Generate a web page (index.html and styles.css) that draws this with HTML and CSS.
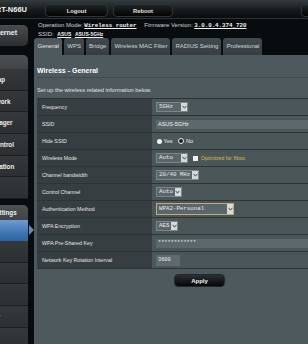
FILE: index.html
```html
<!DOCTYPE html>
<html lang="en">
<head>
    <meta charset="UTF-8">
    <meta name="viewport" content="width=device-width, initial-scale=1.0">
    <title>RT-N66U - Wireless General</title>
    <link rel="stylesheet" href="styles.css">
</head>
<body>
    <div class="page">
        <header class="topbar">
            <div class="logo"><span>RT-N66U</span></div>
            <button class="top-btn btn-logout">Logout</button>
            <button class="top-btn btn-reboot">Reboot</button>
            <button class="top-btn btn-lang">English</button>
        </header>

        <div class="main">
            <nav class="sidenav">
                <div class="quick"><span class="nav-label quick-label">Quick Internet<br>Setup</span></div>

                <div class="menu">
                    <div class="menu-head"><span class="nav-label head-label">General</span></div>
                    <div class="menu-item"><span class="nav-label">Network Map</span></div>
                    <div class="menu-item"><span class="nav-label">Guest Network</span></div>
                    <div class="menu-item"><span class="nav-label">Traffic Manager</span></div>
                    <div class="menu-item"><span class="nav-label">Parental control</span></div>
                    <div class="menu-item"><span class="nav-label">USB application</span></div>
                    <div class="menu-item"><span class="nav-label">AiCloud</span></div>
                </div>

                <div class="menu menu-adv">
                    <div class="menu-head"><span class="nav-label head-label">Advanced Settings</span></div>
                    <div class="menu-item active"><span class="nav-label">Wireless</span></div>
                    <div class="menu-item"><span class="nav-label">LAN</span></div>
                    <div class="menu-item"><span class="nav-label">WAN</span></div>
                    <div class="menu-item"><span class="nav-label">IPv6</span></div>
                    <div class="menu-item"><span class="nav-label">VPN Server</span></div>
                    <div class="menu-item"><span class="nav-label">Firewall</span></div>
                </div>
            </nav>

            <section class="content">
                <div class="info">
                    <div>
                        Operation Mode: <a class="info-mono">Wireless router</a>
                        <span class="info-gap">Firmware Version:</span> <a class="info-mono">3.0.0.4.374_720</a>
                    </div>
                    <div>
                        SSID: <a class="info-ssid">ASUS</a> <a class="info-ssid">ASUS-5GHz</a>
                    </div>
                </div>

                <div class="tabs">
                    <div class="tab active">General</div>
                    <div class="tab">WPS</div>
                    <div class="tab">Bridge</div>
                    <div class="tab">Wireless MAC Filter</div>
                    <div class="tab">RADIUS Setting</div>
                    <div class="tab">Professional</div>
                </div>

                <div class="panel">
                    <div class="panel-title">Wireless - General</div>
                    <div class="panel-desc">Set up the wireless related information below.</div>

                    <div class="form-table">
                        <div class="form-row">
                            <div class="form-label">Frequency</div>
                            <div class="form-value">
                                <div class="select select-32">
                                    <span class="select-text">5GHz</span>
                                    <span class="select-arrow"><svg width="5" height="4" viewBox="0 0 5 4"><path d="M0.6 0.8 L2.5 3.2 L4.4 0.8" fill="none" stroke="#4a4a4a" stroke-width="1"/></svg></span>
                                </div>
                            </div>
                        </div>
                        <div class="form-row">
                            <div class="form-label">SSID</div>
                            <div class="form-value">
                                <div class="text-input input-full">ASUS-5GHz</div>
                            </div>
                        </div>
                        <div class="form-row">
                            <div class="form-label">Hide SSID</div>
                            <div class="form-value">
                                <span class="radio"></span><span class="radio-text">Yes</span>
                                <span class="radio checked"></span><span class="radio-text">No</span>
                            </div>
                        </div>
                        <div class="form-row">
                            <div class="form-label">Wireless Mode</div>
                            <div class="form-value">
                                <div class="select select-32">
                                    <span class="select-text">Auto</span>
                                    <span class="select-arrow"><svg width="5" height="4" viewBox="0 0 5 4"><path d="M0.6 0.8 L2.5 3.2 L4.4 0.8" fill="none" stroke="#4a4a4a" stroke-width="1"/></svg></span>
                                </div>
                                <span class="checkbox"></span>
                                <span class="xbox-text">Optimized for Xbox</span>
                            </div>
                        </div>
                        <div class="form-row">
                            <div class="form-label">Channel bandwidth</div>
                            <div class="form-value">
                                <div class="select">
                                    <span class="select-text">20/40 MHz</span>
                                    <span class="select-arrow"><svg width="5" height="4" viewBox="0 0 5 4"><path d="M0.6 0.8 L2.5 3.2 L4.4 0.8" fill="none" stroke="#4a4a4a" stroke-width="1"/></svg></span>
                                </div>
                            </div>
                        </div>
                        <div class="form-row">
                            <div class="form-label">Control Channel</div>
                            <div class="form-value">
                                <div class="select">
                                    <span class="select-text">Auto</span>
                                    <span class="select-arrow"><svg width="5" height="4" viewBox="0 0 5 4"><path d="M0.6 0.8 L2.5 3.2 L4.4 0.8" fill="none" stroke="#4a4a4a" stroke-width="1"/></svg></span>
                                </div>
                            </div>
                        </div>
                        <div class="form-row">
                            <div class="form-label">Authentication Method</div>
                            <div class="form-value">
                                <div class="select select-auth">
                                    <span class="select-text">WPA2-Personal</span>
                                    <span class="select-arrow"><svg width="5" height="4" viewBox="0 0 5 4"><path d="M0.6 0.8 L2.5 3.2 L4.4 0.8" fill="none" stroke="#4a4a4a" stroke-width="1"/></svg></span>
                                </div>
                            </div>
                        </div>
                        <div class="form-row">
                            <div class="form-label">WPA Encryption</div>
                            <div class="form-value">
                                <div class="select">
                                    <span class="select-text">AES</span>
                                    <span class="select-arrow"><svg width="5" height="4" viewBox="0 0 5 4"><path d="M0.6 0.8 L2.5 3.2 L4.4 0.8" fill="none" stroke="#4a4a4a" stroke-width="1"/></svg></span>
                                </div>
                            </div>
                        </div>
                        <div class="form-row">
                            <div class="form-label">WPA Pre-Shared Key</div>
                            <div class="form-value">
                                <div class="text-input input-full input-mono">************</div>
                            </div>
                        </div>
                        <div class="form-row">
                            <div class="form-label">Network Key Rotation Interval</div>
                            <div class="form-value">
                                <div class="text-input input-short input-mono">3600</div>
                            </div>
                        </div>
                    </div>

                    <button class="apply-btn">Apply</button>
                </div>
            </section>
        </div>
    </div>
</body>
</html>
```

FILE: styles.css
```css
* {
    margin: 0;
    padding: 0;
    box-sizing: border-box;
}

html, body {
    width: 308px;
    height: 344px;
    overflow: hidden;
}

body {
    font-family: 'Liberation Sans', Arial, sans-serif;
    background: #090c0e;
    color: #e4e4e4;
}

.page {
    width: 365px;
}

/* top bar */
.topbar {
    height: 19px;
    display: flex;
    align-items: flex-start;
    padding-top: 4px;
    background: linear-gradient(180deg, #343b3e 0%, #171b1d 55%, #0a0d0e 100%);
    border-bottom: 1px solid #28343a;
}

.logo {
    width: 28px;
    height: 13px;
    display: flex;
    justify-content: flex-end;
    padding-right: 1px;
    font-size: 7.5px;
    font-weight: bold;
    line-height: 12px;
    color: #f2f2f2;
    white-space: nowrap;
}

.top-btn {
    height: 13px;
    border: 1px solid #2f3539;
    border-radius: 4px;
    background: linear-gradient(180deg, #1f2325 0%, #030404 100%);
    color: #e2e2e2;
    font-family: 'Liberation Sans', Arial, sans-serif;
    font-size: 5.8px;
    font-weight: bold;
    flex-shrink: 0;
}

.btn-logout {
    margin-left: 17px;
    width: 63px;
}

.btn-reboot {
    margin-left: 5px;
    width: 60px;
}

.btn-lang {
    margin-left: 128px;
    width: 60px;
}

.main {
    display: flex;
}

/* side menu */
.sidenav {
    width: 28px;
    flex-shrink: 0;
}

.nav-label {
    display: block;
    margin-left: -34px;
    white-space: nowrap;
    font-size: 6.3px;
    font-weight: bold;
    color: #f0f0f0;
}

.head-label {
    margin-left: -40px;
}

.quick {
    margin-top: 6px;
    height: 21px;
    padding-top: 4px;
    overflow: hidden;
    border-radius: 0 5px 5px 0;
    background: linear-gradient(180deg, #4a4d4f 0%, #2b2e30 100%);
}

.quick-label {
    margin-left: -30px;
    font-size: 7px;
    line-height: 8px;
}

.menu {
    margin-top: 9px;
    background: #2e3235;
    border-radius: 0 5px 0 0;
}

.menu-adv {
    margin-top: 6px;
}

.menu-head {
    height: 14px;
    line-height: 14px;
    border-radius: 0 5px 0 0;
    background: linear-gradient(180deg, #4d5154 0%, #404447 100%);
}

.menu-adv .menu-head {
    height: 15px;
    line-height: 15px;
}

.menu-item {
    height: 21.67px;
    line-height: 21px;
    border-bottom: 1px solid #1b1e20;
    background: linear-gradient(180deg, #34383b 0%, #2c3033 100%);
}

.menu-adv .menu-item {
    height: 21.75px;
}

.menu-adv .menu-item.active {
    height: 21px;
    position: relative;
    border-bottom: none;
    background: linear-gradient(180deg, #6c9dd2 0%, #3f76b2 60%, #2c64a0 100%);
}

.menu-item.active::after {
    content: '';
    position: absolute;
    right: -6px;
    top: 5px;
    border-top: 5px solid transparent;
    border-bottom: 5px solid transparent;
    border-left: 5px solid #5b8cc2;
}

/* content area */
.content {
    width: 337px;
    padding-left: 6px;
}

.info {
    height: 19px;
    padding: 1.5px 0 0 4px;
    font-size: 6px;
    line-height: 8.5px;
    color: #cfd4d6;
    white-space: nowrap;
}

.info-mono {
    font-family: 'Liberation Mono', 'Courier New', monospace;
    font-size: 5.8px;
    font-weight: bold;
    color: #f4f4f4;
    text-decoration: underline;
}

.info-gap {
    margin-left: 6px;
}

.info-ssid {
    font-size: 5px;
    font-weight: bold;
    color: #f4f4f4;
    text-decoration: underline;
    margin-left: 2px;
}

.tabs {
    display: flex;
    gap: 2px;
    height: 17px;
}

.tab {
    padding: 0 3px;
    line-height: 17px;
    font-size: 6px;
    color: #d4d8da;
    background: linear-gradient(180deg, #414a4e 0%, #363e42 100%);
    border-radius: 3px 3px 0 0;
    white-space: nowrap;
}

.tab.active {
    padding: 0 3.5px;
    background: #4e595d;
    color: #e6e6e6;
}

.panel {
    background: #4e595d;
    padding: 10px 3px 0;
    height: 289px;
}

.panel-title {
    font-size: 7px;
    font-weight: bold;
    line-height: 12px;
    color: #ffffff;
    border-bottom: 1px solid #434d51;
}

.panel-desc {
    margin-top: 8px;
    font-size: 5.7px;
    line-height: 8px;
    color: #e2e2e2;
}

.form-table {
    margin-top: 4px;
    border-top: 1px solid #2d3437;
}

.form-row {
    display: grid;
    grid-template-columns: 115px 1fr;
    height: 17px;
    border-bottom: 1px solid #2d3437;
}

.form-label {
    display: flex;
    align-items: center;
    padding-left: 5px;
    background: #363e41;
    font-size: 5.3px;
    color: #e6e6e6;
    white-space: nowrap;
}

.form-value {
    display: flex;
    align-items: center;
    padding-left: 4px;
    background: #4b5659;
}

/* controls */
.select {
    display: flex;
    height: 10px;
    border: 1px solid #7c868a;
    background: #5a666a;
}

.select-32 {
    width: 32px;
}

.select-auth {
    width: 78px;
    height: 12px;
    border-color: #c4ab72;
}

.select-text {
    flex: 1;
    padding: 0 2px;
    font-family: 'Liberation Mono', 'Courier New', monospace;
    font-size: 5.8px;
    line-height: 8px;
    color: #ececec;
    white-space: nowrap;
}

.select-auth .select-text {
    line-height: 10px;
}

.select-arrow {
    width: 6px;
    display: flex;
    align-items: center;
    justify-content: center;
    background: #d7dadb;
}

.text-input {
    height: 10px;
    padding-left: 2px;
    background: #5c686c;
    border-top: 1px solid #485357;
    font-size: 5.5px;
    line-height: 8px;
    color: #f0f0f0;
}

.input-full {
    flex: 1;
}

.input-mono {
    font-family: 'Liberation Mono', 'Courier New', monospace;
    font-size: 5.3px;
}

.input-short {
    width: 24px;
    height: 12px;
    line-height: 10px;
    background: #5e6a6e;
}

.radio {
    width: 5px;
    height: 5px;
    border-radius: 50%;
    background: #f2f2f2;
    margin-left: 1px;
}

.radio.checked {
    width: 6px;
    height: 6px;
    background: #1a1c1d;
    border: 1px solid #f0f0f0;
}

.radio-text {
    margin-left: 1.5px;
    margin-right: 5px;
    font-size: 5.5px;
    color: #ececec;
}

.checkbox {
    width: 5px;
    height: 5px;
    margin-left: 5px;
    background: #f2f2f2;
}

.xbox-text {
    margin-left: 3px;
    font-size: 5.2px;
    color: #dfbd4a;
}

.apply-btn {
    display: block;
    margin: 5px auto 0;
    width: 51px;
    height: 13px;
    border: 1px solid #23282b;
    border-radius: 4px;
    background: linear-gradient(180deg, #2b3033 0%, #050606 100%);
    color: #f2f2f2;
    font-family: 'Liberation Sans', Arial, sans-serif;
    font-size: 6px;
    font-weight: bold;
}
```
